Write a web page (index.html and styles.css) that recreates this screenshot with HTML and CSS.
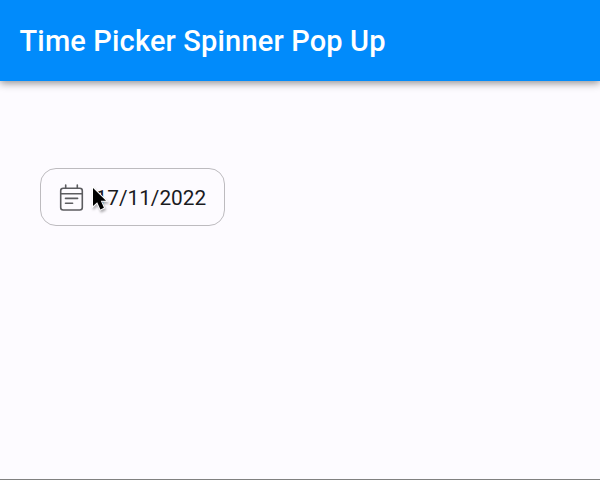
FILE: index.html
```html
<!DOCTYPE html>
<html lang="en">
<head>
<meta charset="utf-8">
<title>Time Picker Spinner Pop Up</title>
<link rel="stylesheet" href="styles.css">
</head>
<body>
<header class="app-bar"><h1 class="title">Time Picker Spinner Pop Up</h1></header>
<main class="content">
  <button class="date-field">
    <svg class="calendar" width="26" height="28" viewBox="0 0 26 28" fill="none" stroke="#5c5c60" stroke-width="1.6" stroke-linecap="round">
      <rect x="1.7" y="4.2" width="21.6" height="21.8" rx="2.5"/>
      <path d="M2 9.8H23M6.7 1V4M18.3 1V4M6.5 14.4H18.6M6.5 19.3H13.6"/>
    </svg>
    <span class="date">17/11/2022</span>
    <svg class="cursor" width="18" height="28" viewBox="0 0 18 28">
      <path d="M2 2V20L6.2 16.2L9.4 23.4L12.9 21.8L9.8 14.8H15Z" fill="#000" stroke="#fff" stroke-width="2" paint-order="stroke"/>
    </svg>
  </button>
</main>
</body>
</html>
```
FILE: styles.css
```css
* { box-sizing: border-box; }
body {
  margin: 0;
  height: 480px;
  display: flex;
  flex-direction: column;
  background: #fdfbff;
  border-bottom: 1px solid #808080;
  font-family: Roboto, sans-serif;
}
.app-bar {
  height: 81px;
  flex: none;
  display: flex;
  align-items: center;
  padding: 0 19.5px;
  background: #018bfb;
  box-shadow: 0 2px 8px rgba(0, 0, 0, 0.45);
}
.title {
  margin: 0;
  color: #fff;
  font-size: 29px;
  font-weight: 500;
  line-height: 34px;
  letter-spacing: 0.16px;
  white-space: nowrap;
}
.content { padding: 87px 40px; }
.date-field {
  position: relative;
  display: flex;
  align-items: center;
  gap: 10.5px;
  width: 185px;
  height: 58px;
  padding: 2px 0 0 18px;
  background: transparent;
  border: 1px solid #bdbbbf;
  border-radius: 16px;
  font-family: inherit;
}
.calendar { flex: none; }
.date {
  color: #1b1b1f;
  font-size: 20.8px;
  line-height: 26px;
  white-space: nowrap;
}
.cursor {
  position: absolute;
  left: 49.5px;
  top: 17px;
  filter: drop-shadow(1px 2px 1px rgba(0, 0, 0, 0.3));
}
```
